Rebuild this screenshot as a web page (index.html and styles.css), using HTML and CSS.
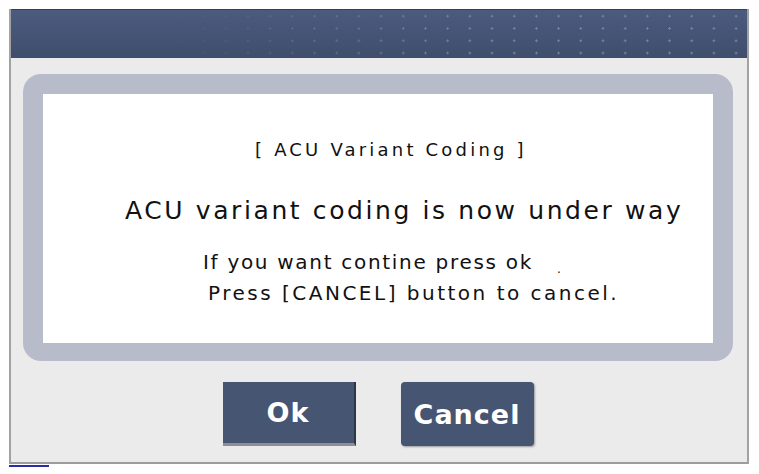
FILE: index.html
```html
<!DOCTYPE html>
<html lang="en">
<head>
    <meta charset="UTF-8">
    <meta name="viewport" content="width=device-width, initial-scale=1.0">
    <title>ACU Variant Coding</title>
    <link rel="stylesheet" href="styles.css">
</head>
<body>
    <div class="window">
        <div class="title-bar"></div>
        <div class="content">
            <div class="frame">
                <div class="message">
                    <p class="msg-title">[ ACU Variant Coding ]</p>
                    <p class="msg-main">ACU variant coding is now under way</p>
                    <p class="msg-line first">If you want contine press ok<span class="dot">.</span></p>
                    <p class="msg-line second">Press [CANCEL] button to cancel.</p>
                </div>
            </div>
            <div class="buttons">
                <button class="btn btn-ok">Ok</button>
                <button class="btn btn-cancel">Cancel</button>
            </div>
        </div>
    </div>
    <div class="task-mark"></div>
</body>
</html>
```

FILE: styles.css
```css
body, html {
    margin: 0;
    padding: 0;
    background-color: #ffffff;
    font-family: "DejaVu Sans", sans-serif;
}
.window {
    margin: 9px 0 0 9px;
    width: 736px;
    background: #ebebeb;
    border-left: 2px solid #a2a2a2;
    border-right: 2px solid #a2a2a2;
    border-bottom: 2px solid #9c9c9c;
}
.title-bar {
    position: relative;
    height: 48px;
    border-top: 1px solid #3a3f4c;
    background: linear-gradient(#4b5b7e, #3f4e6d);
}
.title-bar::after {
    content: "";
    position: absolute;
    top: 0;
    left: 0;
    right: 0;
    bottom: 0;
    background-image: radial-gradient(circle, #7989a6 0.9px, transparent 1.3px);
    background-size: 22.2px 12.3px;
    background-position: 4px 0;
    -webkit-mask-image: linear-gradient(to right, transparent 20%, #000 65%);
    mask-image: linear-gradient(to right, transparent 20%, #000 65%);
}
.content {
    padding: 16px 14px 16px 12px;
}
.frame {
    background: #b8bcca;
    border-radius: 18px;
    padding: 20px 20px 18px 20px;
}
.message {
    background: #ffffff;
    height: 248px;
    padding-top: 1px;
    color: #111;
}
.message p {
    margin: 0;
    white-space: nowrap;
}
.msg-title {
    margin-top: 44px !important;
    padding-left: 212px;
    font-size: 18px;
    letter-spacing: 3.2px;
    line-height: 22px;
}
.msg-main {
    margin-top: 35px !important;
    padding-left: 82px;
    font-size: 25px;
    letter-spacing: 2.6px;
    line-height: 30px;
}
.msg-line {
    font-size: 20px;
    line-height: 31px;
}
.msg-line.first {
    margin-top: 21px !important;
    padding-left: 160px;
    letter-spacing: 1.7px;
}
.msg-line.second {
    padding-left: 165px;
    letter-spacing: 2.5px;
}
.dot {
    margin-left: 24px;
    font-size: 12px;
    line-height: 0;
    vertical-align: -4px;
}
.buttons {
    display: flex;
    justify-content: center;
    gap: 45px;
    margin-top: 21px;
}
.btn {
    width: 133px;
    height: 64px;
    background-color: #465572;
    color: #ffffff;
    border: none;
    font-family: "DejaVu Sans", sans-serif;
    font-size: 27px;
    font-weight: bold;
    letter-spacing: 1px;
    padding: 0;
    cursor: pointer;
}
.btn-ok {
    border-bottom: 3px solid #8e8e96;
    border-right: 2px solid #2f3644;
}
.btn-cancel {
    border-radius: 4px;
    box-shadow: 1px 1px 2px rgba(0, 0, 0, 0.35);
}
.task-mark {
    margin: 1px 0 0 9px;
    width: 40px;
    height: 2px;
    background: #2c2ca8;
}
```
